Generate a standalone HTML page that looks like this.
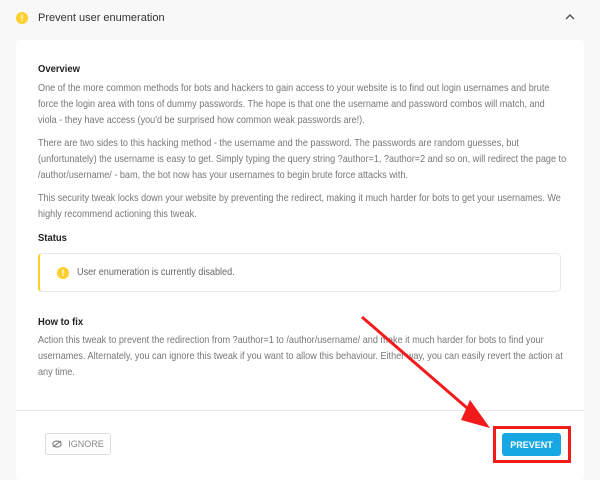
<!DOCTYPE html>
<html><head><meta charset="utf-8"><style>
*{margin:0;padding:0;box-sizing:border-box}
body{width:600px;height:472px;background:#f8f8f8;font-family:"Liberation Sans",sans-serif;position:relative;overflow:hidden;color:#666}
.hdr{position:absolute;left:16px;top:9px;height:18px;display:flex;align-items:center}
.ic{width:12px;height:12px;border-radius:50%;background:#fecf2f;color:#fff;font-size:9px;font-weight:bold;text-align:center;line-height:12px}
.hdr span{margin-left:10px;font-size:11px;color:#333}
.card{position:absolute;left:16px;top:40px;width:568px;height:440px;background:#fff;border-radius:4px}
.t{position:absolute;left:38px;font-size:10.4px;line-height:16px;white-space:nowrap;color:#777;transform:scaleX(0.875);transform-origin:0 0}
.h{position:absolute;left:38px;font-size:10.5px;font-weight:bold;color:#222;transform:scaleX(0.9);transform-origin:0 0}
.box{position:absolute;left:38px;top:253px;width:523px;height:39px;border:1px solid #e8e8e8;border-left:2px solid #fecf2f;border-radius:4px}
.sep{position:absolute;left:16px;top:410px;width:568px;height:1px;background:#e8e8e8}
.ign{position:absolute;left:45px;top:433px;width:66px;height:22px;border:1px solid #ddd;border-radius:3px;font-size:9px;color:#888;display:flex;align-items:center;justify-content:center}
.prv{position:absolute;left:502px;top:433px;width:59px;height:23px;background:#17a8e3;border-radius:3px;color:#fff;font-size:9px;font-weight:bold;display:flex;align-items:center;justify-content:center}
.red{position:absolute;left:493px;top:426px;width:78px;height:37px;border:3px solid #f21a1a}
</style></head><body>
<div class="hdr"><div class="ic">!</div><span>Prevent user enumeration</span></div>
<svg style="position:absolute;left:565px;top:13px" width="10" height="8"><path d="M1 6L5 2L9 6" stroke="#555" stroke-width="1.5" fill="none"/></svg>
<div class="card"></div>
<div class="h" style="top:63px">Overview</div>
<div class="t" style="top:81px">One of the more common methods for bots and hackers to gain access to your website is to find out login usernames and brute<br>force the login area with tons of dummy passwords. The hope is that one the username and password combos will match, and<br>viola - they have access (you'd be surprised how common weak passwords are!).</div>
<div class="t" style="top:136px">There are two sides to this hacking method - the username and the password. The passwords are random guesses, but<br>(unfortunately) the username is easy to get. Simply typing the query string ?author=1, ?author=2 and so on, will redirect the page to<br>/author/username/ - bam, the bot now has your usernames to begin brute force attacks with.</div>
<div class="t" style="top:191px">This security tweak locks down your website by preventing the redirect, making it much harder for bots to get your usernames. We<br>highly recommend actioning this tweak.</div>
<div class="h" style="top:232px">Status</div>
<div class="box"><div class="ic" style="position:absolute;left:17px;top:13px">!</div><div class="t" style="left:37px;top:11px;color:#666">User enumeration is currently disabled.</div></div>
<div class="h" style="top:316px">How to fix</div>
<div class="t" style="top:333px">Action this tweak to prevent the redirection from ?author=1 to /author/username/ and make it much harder for bots to find your<br>usernames. Alternately, you can ignore this tweak if you want to allow this behaviour. Either way, you can easily revert the action at<br>any time.</div>
<div class="sep"></div>
<div class="ign"><svg width="10" height="8" style="margin-right:6px"><ellipse cx="5" cy="4" rx="4.2" ry="3" fill="none" stroke="#888" stroke-width="1.2"/><path d="M1 7L9 1" stroke="#888" stroke-width="1.2"/></svg>IGNORE</div>
<div class="prv">PREVENT</div>
<div class="red"></div>
<svg style="position:absolute;left:0;top:0" width="600" height="472"><path d="M362 317L474 414" stroke="#f21a1a" stroke-width="3"/><path d="M490 428L470 400L461 420Z" fill="#f21a1a"/></svg>
</body></html>
